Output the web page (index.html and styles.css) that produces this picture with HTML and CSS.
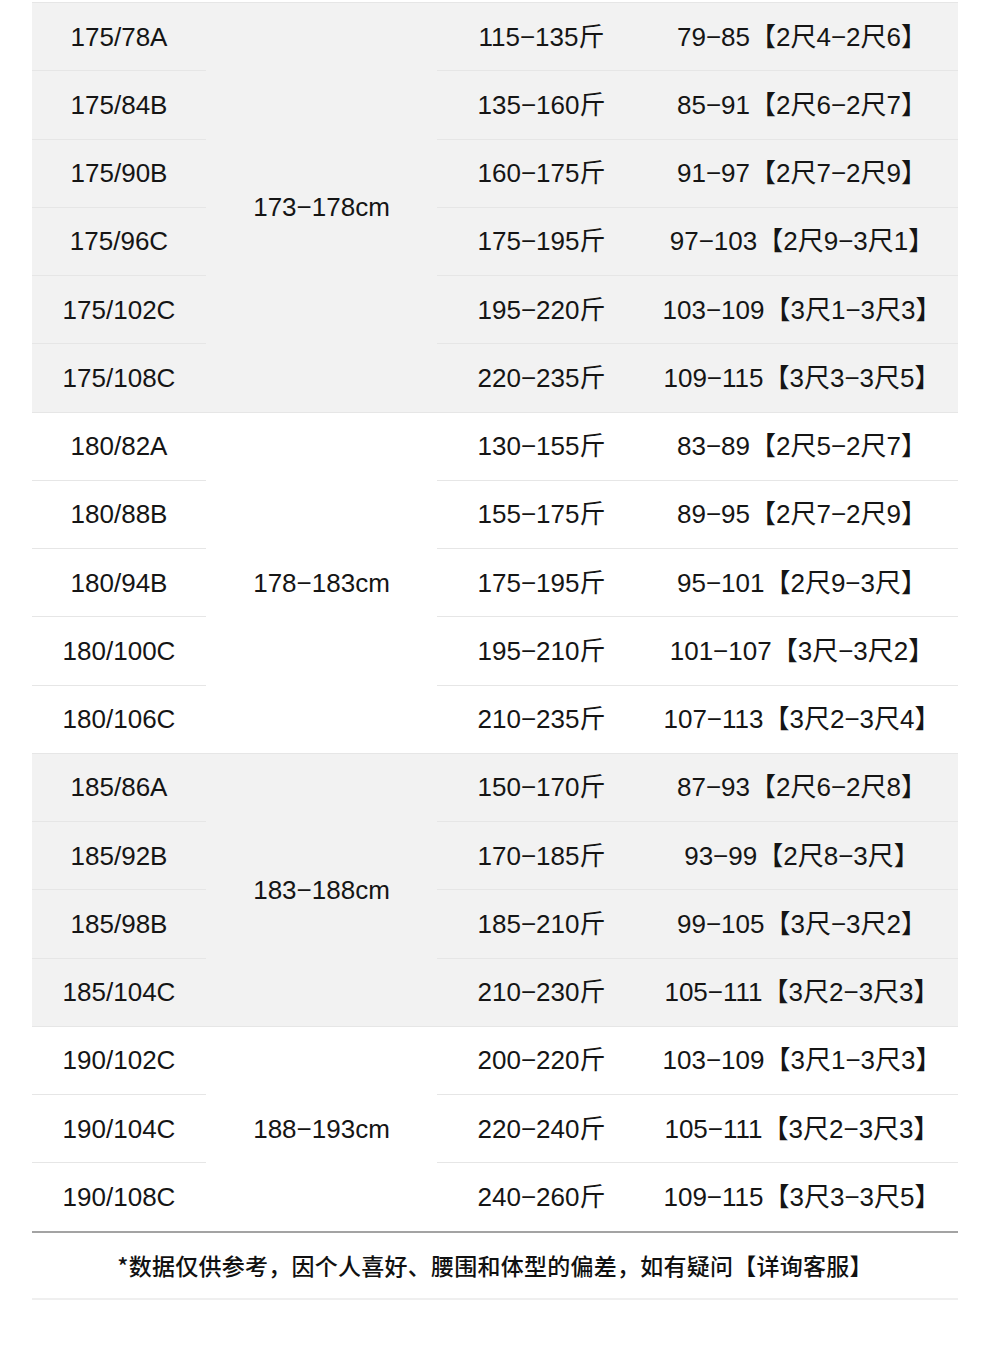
FILE: index.html
```html
<!DOCTYPE html>
<html lang="zh">
<head>
<meta charset="utf-8">
<title>尺码表</title>
<link rel="stylesheet" href="styles.css">
</head>
<body>
<div class="page">
  <table class="size-table">
    <colgroup>
      <col class="c1"><col class="c2"><col class="c3"><col class="c4">
    </colgroup>
    <tbody class="grp shade">
      <tr><td>175/78A</td><td class="height" rowspan="6">173−178cm</td><td>115−135斤</td><td>79−85【2尺4−2尺6】</td></tr>
      <tr><td>175/84B</td><td>135−160斤</td><td>85−91【2尺6−2尺7】</td></tr>
      <tr><td>175/90B</td><td>160−175斤</td><td>91−97【2尺7−2尺9】</td></tr>
      <tr><td>175/96C</td><td>175−195斤</td><td>97−103【2尺9−3尺1】</td></tr>
      <tr><td>175/102C</td><td>195−220斤</td><td>103−109【3尺1−3尺3】</td></tr>
      <tr><td>175/108C</td><td>220−235斤</td><td>109−115【3尺3−3尺5】</td></tr>
    </tbody>
    <tbody class="grp">
      <tr><td>180/82A</td><td class="height" rowspan="5">178−183cm</td><td>130−155斤</td><td>83−89【2尺5−2尺7】</td></tr>
      <tr><td>180/88B</td><td>155−175斤</td><td>89−95【2尺7−2尺9】</td></tr>
      <tr><td>180/94B</td><td>175−195斤</td><td>95−101【2尺9−3尺】</td></tr>
      <tr><td>180/100C</td><td>195−210斤</td><td>101−107【3尺−3尺2】</td></tr>
      <tr><td>180/106C</td><td>210−235斤</td><td>107−113【3尺2−3尺4】</td></tr>
    </tbody>
    <tbody class="grp shade">
      <tr><td>185/86A</td><td class="height" rowspan="4">183−188cm</td><td>150−170斤</td><td>87−93【2尺6−2尺8】</td></tr>
      <tr><td>185/92B</td><td>170−185斤</td><td>93−99【2尺8−3尺】</td></tr>
      <tr><td>185/98B</td><td>185−210斤</td><td>99−105【3尺−3尺2】</td></tr>
      <tr><td>185/104C</td><td>210−230斤</td><td>105−111【3尺2−3尺3】</td></tr>
    </tbody>
    <tbody class="grp">
      <tr><td>190/102C</td><td class="height" rowspan="3">188−193cm</td><td>200−220斤</td><td>103−109【3尺1−3尺3】</td></tr>
      <tr><td>190/104C</td><td>220−240斤</td><td>105−111【3尺2−3尺3】</td></tr>
      <tr><td>190/108C</td><td>240−260斤</td><td>109−115【3尺3−3尺5】</td></tr>
    </tbody>
  </table>
  <p class="note">*数据仅供参考，因个人喜好、腰围和体型的偏差，如有疑问【详询客服】</p>
</div>
</body>
</html>
```

FILE: styles.css
```css
html, body {
  margin: 0;
  padding: 0;
  background: #ffffff;
}

.page {
  width: 926px;
  margin-left: 32px;
  padding-top: 2px;
  font-family: "Liberation Sans", Arial, "Noto Sans CJK SC", sans-serif;
  color: #151515;
}

.size-table {
  width: 926px;
  border-collapse: separate;
  border-spacing: 0;
  table-layout: fixed;
  border-bottom: 2px solid #a3a3a3;
}

.c1 { width: 174px; }
.c2 { width: 231px; }
.c3 { width: 209px; }
.c4 { width: 312px; }

.size-table td {
  height: 67.25px;
  padding: 0;
  border-top: 1px solid #e6e6e6;
  text-align: center;
  vertical-align: middle;
  font-size: 26px;
  line-height: 30px;
  white-space: nowrap;
}

.size-table td.height {
  border-top: 1px solid #e6e6e6;
}

.grp.shade td {
  background: #f2f2f2;
}

.size-table tbody:first-child tr:first-child td {
  border-top-color: #e9e9e9;
}

.note {
  margin: 0;
  height: 64px;
  padding-bottom: 1px;
  display: flex;
  align-items: center;
  justify-content: center;
  font-family: "Noto Sans CJK SC", sans-serif;
  font-size: 23px;
  font-weight: 500;
  color: #111;
  border-bottom: 2px solid #efefef;
  letter-spacing: 0.25px;
}
```
